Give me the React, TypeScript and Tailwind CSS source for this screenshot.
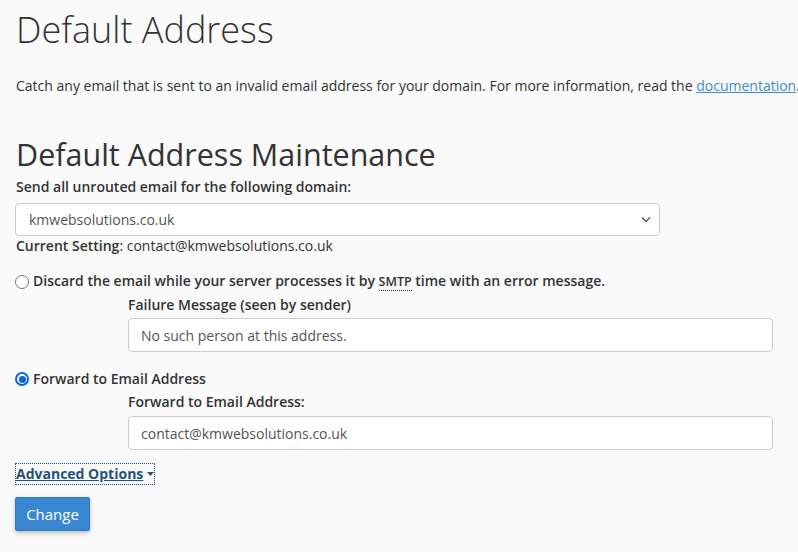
import React from "react";

const App = () => {
  return (
    <div
      className="min-h-[552px] w-[798px] overflow-hidden bg-[#fafafa] px-[15px] text-[14px] text-[#333]"
      style={{ fontFamily: '"Open Sans", sans-serif' }}
    >
      <h1 className="pt-[8px] pl-[1px] text-[36px] font-light leading-[44px] text-[#333]">Default Address</h1>
      <p className="mt-[24px] whitespace-nowrap pl-[1px] leading-[20px]">
        Catch any email that is sent to an invalid email address for your domain. For more information, read the{" "}
        <a href="#" className="text-[#3f8ccb] underline">documentation</a>.
      </p>

      <h2 className="mt-[40px] pl-[1px] text-[30.5px] leading-[36px] text-[#333]">Default Address Maintenance</h2>
      <label className="mt-[5px] block pl-[1px] font-semibold leading-[20px]">Send all unrouted email for the following domain:</label>
      <div className="relative mt-[6px] flex h-[33px] w-[645px] items-center rounded-[4px] border border-[#ccc] bg-white pl-[13px] text-[#555]">
        kmwebsolutions.co.uk
        <svg className="absolute right-[8px] top-[12px]" width="10" height="7" viewBox="0 0 10 7">
          <path d="M1 1.5 L5 5.5 L9 1.5" fill="none" stroke="#555" strokeWidth="1.4" />
        </svg>
      </div>
      <div className="pl-[1px] leading-[20px]">
        <span className="font-semibold">Current Setting</span>: contact@kmwebsolutions.co.uk
      </div>

      <div className="mt-[15px] flex items-center gap-[4px] leading-[20px]">
        <span className="h-[14px] w-[14px] rounded-full border border-[#767676] bg-white" />
        <span className="font-semibold">
          Discard the email while your server processes it by{" "}
          <abbr className="border-b border-dotted border-[#333] text-[12.5px] no-underline">SMTP</abbr> time with an error message.
        </span>
      </div>
      <div className="ml-[113px]">
        <div className="mt-[3px] font-semibold leading-[20px]">Failure Message (seen by sender)</div>
        <div className="mt-[3px] flex h-[34px] w-[645px] items-center rounded-[4px] border border-[#ccc] bg-white pl-[12px] text-[#555]">
          No such person at this address.
        </div>
      </div>

      <div className="mt-[17px] flex items-center gap-[4px] leading-[20px]">
        <span className="flex h-[14px] w-[14px] items-center justify-center rounded-full border-2 border-[#0b63e5] bg-white">
          <span className="h-[7px] w-[7px] rounded-full bg-[#0b63e5]" />
        </span>
        <span className="font-semibold">Forward to Email Address</span>
      </div>
      <div className="ml-[113px]">
        <div className="mt-[3px] font-semibold leading-[20px]">Forward to Email Address:</div>
        <div className="mt-[4px] flex h-[34px] w-[645px] items-center rounded-[4px] border border-[#ccc] bg-white pl-[12px] text-[#555]">
          contact@kmwebsolutions.co.uk
        </div>
      </div>

      <div className="mt-[14px] pl-[1px] leading-[20px]">
        <a href="#" className="inline-flex items-center gap-[4px] font-bold text-[#23527c] underline outline-1 outline-dotted outline-[#23527c]">
          Advanced Options
          <svg width="7" height="4" viewBox="0 0 7 4"><path d="M0 0 L7 0 L3.5 4 Z" fill="#23527c" /></svg>
        </a>
      </div>

      <button className="mt-[13px] h-[34px] w-[75px] rounded-[2px] border border-[#2f78be] bg-[#3a87d1] text-[15px] text-white shadow-[0_2px_4px_rgba(0,0,0,0.25)]">
        Change
      </button>
    </div>
  );
};

export default App;
